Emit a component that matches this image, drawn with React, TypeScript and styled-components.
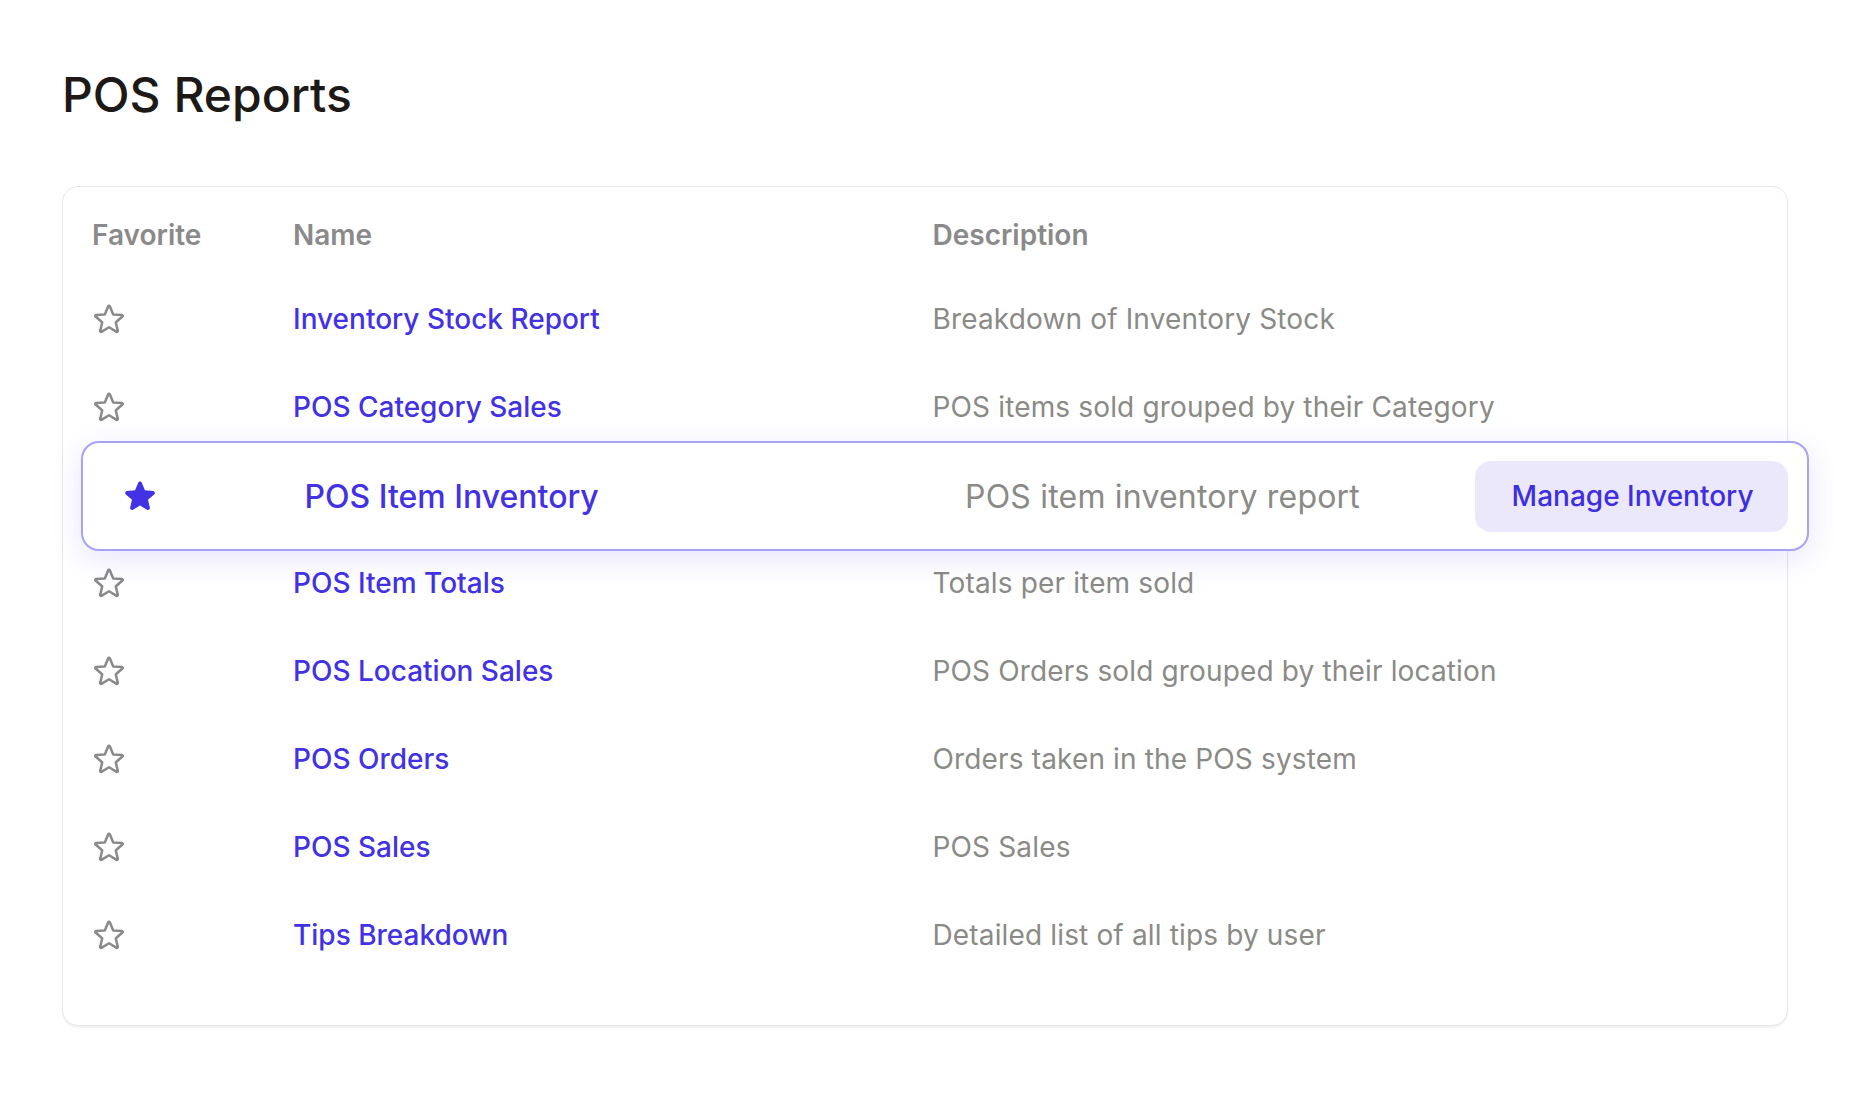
import React from 'react';
import styled, { createGlobalStyle } from 'styled-components';

type Report = {
  id: string;
  name: string;
  description: string;
  favorite?: boolean;
  action?: string;
};

const reports: Report[] = [
  { id: 'inventory-stock', name: 'Inventory Stock Report', description: 'Breakdown of Inventory Stock' },
  { id: 'category-sales', name: 'POS Category Sales', description: 'POS items sold grouped by their Category' },
  {
    id: 'item-inventory',
    name: 'POS Item Inventory',
    description: 'POS item inventory report',
    favorite: true,
    action: 'Manage Inventory',
  },
  { id: 'item-totals', name: 'POS Item Totals', description: 'Totals per item sold' },
  { id: 'location-sales', name: 'POS Location Sales', description: 'POS Orders sold grouped by their location' },
  { id: 'orders', name: 'POS Orders', description: 'Orders taken in the POS system' },
  { id: 'sales', name: 'POS Sales', description: 'POS Sales' },
  { id: 'tips', name: 'Tips Breakdown', description: 'Detailed list of all tips by user' },
];

const GlobalStyle = createGlobalStyle`
  * {
    box-sizing: border-box;
  }

  body {
    margin: 0;
    background: #ffffff;
    font-family: Inter, "Noto Sans", "Liberation Sans", sans-serif;
    -webkit-font-smoothing: antialiased;
  }
`;

const Page = styled.main`
  padding: 66px 65px 60px 61.5px;
`;

const Title = styled.h1`
  margin: 0 0 61.5px 0.5px;
  font-size: 48px;
  line-height: 58px;
  font-weight: 500;
  color: #1c1917;
`;

const Card = styled.section`
  border: 1.5px solid #e8e8e8;
  border-radius: 16px;
  padding: 8.5px 29px 46px 28px;
  box-shadow: 0 1.5px 1px rgba(0, 0, 0, 0.05);
  background: #ffffff;
`;

const HeaderRow = styled.div`
  display: grid;
  grid-template-columns: 202.5px 639.5px 1fr;
  align-items: center;
  height: 80px;
`;

const HeaderCell = styled.div<{ $first?: boolean }>`
  padding-left: ${({ $first }) => ($first ? '1.5px' : '0')};
  font-size: 28px;
  font-weight: 600;
  color: #8a8a8a;
`;

const Row = styled.div`
  display: grid;
  grid-template-columns: 202.5px 639.5px 1fr;
  align-items: center;
  height: 88px;
`;

const ActiveRow = styled.div`
  position: relative;
  display: grid;
  grid-template-columns: 183px 660.5px 1fr auto;
  align-items: center;
  height: 110px;
  margin: -10px -50.5px -12px -9.5px;
  padding: 0 19px 0 38.5px;
  border: 2px solid #a9a1f4;
  border-radius: 18px;
  background: #ffffff;
  box-shadow: 0 8px 30px rgba(88, 72, 230, 0.14);
`;

const StarCell = styled.div`
  display: flex;
  align-items: center;
  height: 36px;
`;

const NameLink = styled.a<{ $large?: boolean }>`
  font-size: ${({ $large }) => ($large ? '32px' : '28px')};
  font-weight: 500;
  color: #4232e4;
  text-decoration: none;
  white-space: nowrap;
`;

const Description = styled.div<{ $large?: boolean }>`
  font-size: ${({ $large }) => ($large ? '32px' : '28px')};
  font-weight: 400;
  letter-spacing: ${({ $large }) => ($large ? '0.2px' : '0.15px')};
  color: #8a8a87;
  white-space: nowrap;
`;

const ActionButton = styled.button`
  height: 71px;
  padding: 0 34px 0 37px;
  border: none;
  border-radius: 16px;
  background: #ebe8fc;
  color: #3d2ee2;
  font-family: inherit;
  font-size: 28px;
  font-weight: 500;
  cursor: pointer;
  white-space: nowrap;
`;

const StarIcon = ({ filled }: { filled?: boolean }) =>
  filled ? (
    <svg width="36" height="36" viewBox="0 0 24 24" fill="#4232e4">
      <path
        fillRule="evenodd"
        clipRule="evenodd"
        d="M10.788 3.21c.448-1.077 1.976-1.077 2.424 0l2.082 5.006 5.404.434c1.164.093 1.636 1.545.749 2.305l-4.117 3.527 1.257 5.273c.271 1.136-.964 2.033-1.96 1.425L12 18.354 7.373 21.18c-.996.608-2.231-.29-1.96-1.425l1.257-5.273-4.117-3.527c-.887-.76-.415-2.212.749-2.305l5.404-.434 2.082-5.005Z"
      />
    </svg>
  ) : (
    <svg width="36" height="36" viewBox="0 0 24 24" fill="none" stroke="#8a8a8a" strokeWidth="1.7">
      <path
        strokeLinecap="round"
        strokeLinejoin="round"
        d="M11.48 3.499a.562.562 0 0 1 1.04 0l2.125 5.111a.563.563 0 0 0 .475.345l5.518.442c.499.04.701.663.321.988l-4.204 3.602a.563.563 0 0 0-.182.557l1.285 5.385a.562.562 0 0 1-.84.61l-4.725-2.885a.562.562 0 0 0-.586 0L6.982 20.54a.562.562 0 0 1-.84-.61l1.285-5.386a.562.562 0 0 0-.182-.557l-4.204-3.602a.562.562 0 0 1 .321-.988l5.518-.442a.563.563 0 0 0 .475-.345L11.48 3.5Z"
      />
    </svg>
  );

export default function App() {
  return (
    <>
      <GlobalStyle />
      <Page>
        <Title>POS Reports</Title>
        <Card>
          <HeaderRow>
            <HeaderCell $first>Favorite</HeaderCell>
            <HeaderCell>Name</HeaderCell>
            <HeaderCell>Description</HeaderCell>
          </HeaderRow>
          {reports.map((report) =>
            report.action ? (
              <ActiveRow key={report.id}>
                <StarCell>
                  <StarIcon filled={report.favorite} />
                </StarCell>
                <NameLink href="#" $large>
                  {report.name}
                </NameLink>
                <Description $large>{report.description}</Description>
                <ActionButton>{report.action}</ActionButton>
              </ActiveRow>
            ) : (
              <Row key={report.id}>
                <StarCell>
                  <StarIcon filled={report.favorite} />
                </StarCell>
                <NameLink href="#">{report.name}</NameLink>
                <Description>{report.description}</Description>
              </Row>
            )
          )}
        </Card>
      </Page>
    </>
  );
}
